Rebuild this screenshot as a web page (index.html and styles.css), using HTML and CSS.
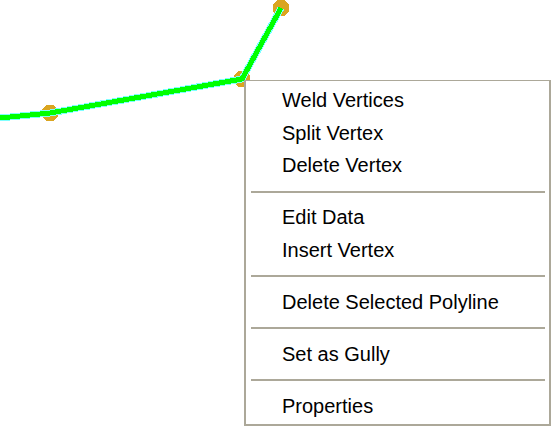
FILE: index.html
```html
<!DOCTYPE html>
<html>
<head>
<meta charset="utf-8">
<link rel="stylesheet" href="styles.css">
</head>
<body>
<div class="canvas">
  <svg class="drawing" width="551" height="427" viewBox="0 0 551 427">
    <g fill="#daa520" shape-rendering="crispEdges">
      <circle cx="50" cy="113" r="8.5"/>
      <circle cx="242" cy="79" r="8.5"/>
      <circle cx="281" cy="8" r="8.5"/>
    </g>
    <polyline points="-5,118.5 50,113 242,79 281,8" fill="none" stroke="#80ffff" stroke-width="7" stroke-linejoin="round" shape-rendering="crispEdges"/>
    <polyline points="-5,118.5 50,113 242,79 281,8" fill="none" stroke="#00ff00" stroke-width="5" stroke-linejoin="round" shape-rendering="crispEdges"/>
  </svg>
  <div class="menu">
    <div class="item">Weld Vertices</div>
    <div class="item">Split Vertex</div>
    <div class="item">Delete Vertex</div>
    <div class="sep"></div>
    <div class="item">Edit Data</div>
    <div class="item">Insert Vertex</div>
    <div class="sep"></div>
    <div class="item">Delete Selected Polyline</div>
    <div class="sep"></div>
    <div class="item">Set as Gully</div>
    <div class="sep"></div>
    <div class="item">Properties</div>
  </div>
</div>
</body>
</html>
```
FILE: styles.css
```css
html, body {
  margin: 0;
  padding: 0;
  background: #ffffff;
}
.canvas {
  position: relative;
  width: 551px;
  height: 427px;
  overflow: hidden;
}
.drawing {
  position: absolute;
  left: 0;
  top: 0;
}
.menu {
  position: absolute;
  left: 244px;
  top: 80px;
  width: 307px;
  height: 346px;
  box-sizing: border-box;
  background: #ffffff;
  border-top: 1px solid #aca899;
  border-left: 2px solid #aca899;
  border-right: 2px solid #aca899;
  border-bottom: 2px solid #aca899;
  padding: 3px 0 0 0;
  font-family: "Liberation Sans", Arial, sans-serif;
  font-size: 20px;
  color: #000000;
}
.item {
  height: 32.5px;
  line-height: 32.5px;
  padding-left: 36px;
  white-space: nowrap;
}
.sep {
  height: 2px;
  margin: 9px 4px 8.5px 5px;
  background: #aca899;
}
```
